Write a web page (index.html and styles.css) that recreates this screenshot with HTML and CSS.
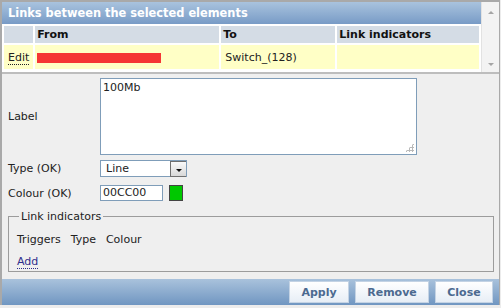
FILE: index.html
```html
<!DOCTYPE html>
<html lang="en">
<head>
    <meta charset="UTF-8">
    <title>Map links</title>
    <link rel="stylesheet" href="styles.css">
</head>
<body>

<div class="dialog">
    <div class="links">
        <div class="links-body">
            <div class="title">Links between the selected elements</div>
            <table class="link-table">
                <thead>
                    <tr>
                        <th class="col-edit"></th>
                        <th class="col-from">From</th>
                        <th class="col-to">To</th>
                        <th>Link indicators</th>
                    </tr>
                </thead>
                <tbody>
                    <tr class="selected">
                        <td><a href="#" class="edit">Edit</a></td>
                        <td><span class="redacted"></span></td>
                        <td>Switch_(128)</td>
                        <td></td>
                    </tr>
                </tbody>
            </table>
        </div>
        <div class="scrollbar">
            <span class="arrow-up"></span>
            <span class="arrow-down"></span>
        </div>
    </div>

    <div class="form">
        <div class="row row-label">
            <label>Label</label>
            <div class="textarea">100Mb<span class="grip"></span></div>
        </div>
        <div class="row row-type">
            <label>Type (OK)</label>
            <div class="select">Line<span class="select-btn"><span class="caret"></span></span></div>
        </div>
        <div class="row row-colour">
            <label>Colour (OK)</label>
            <div class="input">00CC00</div>
            <span class="swatch"></span>
        </div>

        <fieldset class="indicators">
            <legend>Link indicators</legend>
            <div class="ind-head">
                <span>Triggers</span>
                <span>Type</span>
                <span>Colour</span>
            </div>
            <a href="#" class="add">Add</a>
        </fieldset>
    </div>

    <div class="footer">
        <button class="btn btn-apply">Apply</button>
        <button class="btn btn-remove">Remove</button>
        <button class="btn btn-close">Close</button>
    </div>
</div>

</body>
</html>
```

FILE: styles.css
```css
body {
    margin: 0;
    padding: 0;
    background-color: #ececec;
    font-family: "DejaVu Sans", Verdana, sans-serif;
    font-size: 11px;
    color: #222;
}

.dialog {
    width: 497px;
    border-top: 2px solid #a9a9a9;
    border-left: 2px solid #a9a9a9;
    border-right: 1px solid #a9a9a9;
    background-color: #efefef;
}

/* top list of links */
.links {
    display: flex;
    height: 70px;
    background-color: #fff;
    border-bottom: 2px solid #bdbdbd;
}

.links-body {
    flex: 1;
}

.title {
    height: 22px;
    line-height: 22px;
    padding-left: 6px;
    color: #fff;
    font-weight: bold;
    font-size: 11.4px;
    background: linear-gradient(#a9c3de, #789bc6);
}

.link-table {
    border-collapse: separate;
    border-spacing: 2px;
    width: 479px;
}

.link-table th {
    background-color: #d4dce5;
    height: 17px;
    padding: 0 2px;
    text-align: left;
    font-size: 11px;
    font-weight: bold;
    color: #111;
}

.link-table td {
    background-color: #ffffc6;
    height: 24px;
    padding: 0 4px;
    white-space: nowrap;
}

.col-edit {
    width: 24px;
}

.col-from {
    width: 180px;
}

.col-to {
    width: 110px;
}

.edit {
    color: #222;
    text-decoration: none;
    border-bottom: 1px dotted #222;
}

.redacted {
    display: inline-block;
    width: 124px;
    height: 10px;
    margin-left: -2px;
    vertical-align: middle;
    background-color: #f53535;
}

.scrollbar {
    width: 17px;
    background-color: #f3f3f3;
    border-left: 1px solid #e2e2e2;
    display: flex;
    flex-direction: column;
    justify-content: space-between;
    align-items: center;
    padding: 9px 0 6px;
}

.arrow-up,
.arrow-down {
    width: 0;
    height: 0;
    border-left: 3px solid transparent;
    border-right: 3px solid transparent;
}

.arrow-up {
    border-bottom: 3px solid #a5a5a5;
}

.arrow-down {
    border-top: 3px solid #a5a5a5;
}

/* edit form */
.form {
    padding: 4px 5px 0 6px;
    height: 201px;
}

.row {
    display: flex;
    align-items: center;
}

.row label {
    width: 92px;
}

.textarea {
    position: relative;
    width: 311px;
    height: 71px;
    padding: 2px;
    background-color: #fff;
    border: 1px solid #7f9db9;
}

.grip {
    position: absolute;
    right: 2px;
    bottom: 2px;
    width: 9px;
    height: 9px;
    background:
        radial-gradient(circle, #b9b9b9 1px, transparent 1.2px) 0 0 / 3px 3px;
    clip-path: polygon(100% 0, 100% 100%, 0 100%);
}

.row-type {
    margin-top: 5px;
}

.select {
    position: relative;
    width: 80px;
    height: 15px;
    line-height: 15px;
    padding-left: 5px;
    background-color: #fff;
    border: 1px solid #7f9db9;
}

.select-btn {
    position: absolute;
    top: 0;
    right: 0;
    width: 15px;
    height: 14px;
    background: linear-gradient(#fafafa, #d8d8d8);
    border: 1px solid #6f6f6f;
    border-right: 0;
    display: flex;
    align-items: center;
    justify-content: center;
}

.caret {
    width: 0;
    height: 0;
    margin-top: 3px;
    border-left: 3px solid transparent;
    border-right: 3px solid transparent;
    border-top: 3px solid #111;
}

.row-colour {
    margin-top: 8px;
}

.input {
    width: 59px;
    height: 14px;
    line-height: 14px;
    padding-left: 2px;
    background-color: #fff;
    border: 1px solid #7f9db9;
}

.swatch {
    width: 12px;
    height: 14px;
    margin-left: 6px;
    background-color: #00c800;
    border: 1px solid #444;
}

.indicators {
    margin: 9px 0 0 0;
    padding: 10px 6px 0 8px;
    height: 50px;
    border: 1px solid #9c9c9c;
}

.indicators legend {
    padding: 0 2px;
    margin-left: 2px;
}

.ind-head {
    display: flex;
    gap: 10px;
}

.add {
    display: inline-block;
    margin-top: 10px;
    color: #2e2e8c;
    text-decoration: none;
    border-bottom: 1px dotted #2e2e8c;
    line-height: 12px;
}

/* bottom buttons */
.footer {
    height: 26px;
    display: flex;
    justify-content: flex-end;
    align-items: flex-start;
    gap: 6px;
    padding-right: 6px;
    background: linear-gradient(#a9c2dc, #7096c1);
}

.btn {
    height: 22px;
    margin-top: 2px;
    border: 1px solid #c4d3e4;
    background: linear-gradient(#ffffff, #e7eef6);
    color: #4c6a90;
    font-family: "DejaVu Sans", Verdana, sans-serif;
    font-size: 11px;
    font-weight: bold;
    cursor: pointer;
}

.btn-apply {
    width: 60px;
}

.btn-remove {
    width: 74px;
}

.btn-close {
    width: 58px;
}
```
